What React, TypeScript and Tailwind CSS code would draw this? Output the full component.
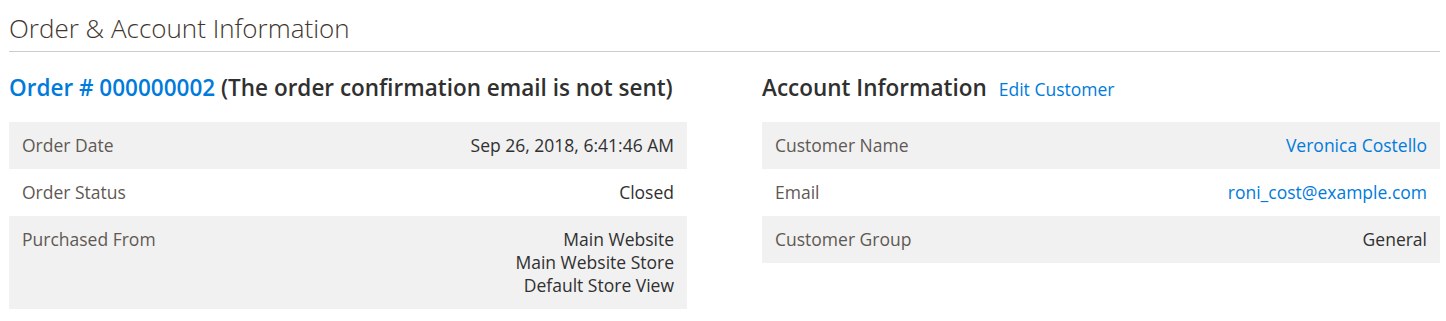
import React from "react";

type Row = { label: string; value: React.ReactNode };

const font = { fontFamily: '"Open Sans", "Noto Sans", sans-serif' };

const InfoTable: React.FC<{ rows: Row[] }> = ({ rows }) => (
  <table className="w-full border-collapse text-[17.5px] leading-[23px]">
    <tbody>
      {rows.map((row, i) => (
        <tr key={row.label} className={i % 2 === 0 ? "bg-[#f1f1f1]" : "bg-white"}>
          <th className="py-3 pl-[13px] pr-3 text-left align-top font-normal text-[#5f5954]">{row.label}</th>
          <td className="py-3 pr-[13px] pl-3 text-right align-top text-[#303030]">{row.value}</td>
        </tr>
      ))}
    </tbody>
  </table>
);

const App: React.FC = () => {
  const orderRows: Row[] = [
    { label: "Order Date", value: "Sep 26, 2018, 6:41:46 AM" },
    { label: "Order Status", value: "Closed" },
    {
      label: "Purchased From",
      value: (
        <>
          Main Website
          <br />
          Main Website Store
          <br />
          Default Store View
        </>
      ),
    },
  ];

  const accountRows: Row[] = [
    {
      label: "Customer Name",
      value: (
        <a href="#" className="text-[#007bdb]">
          Veronica Costello
        </a>
      ),
    },
    {
      label: "Email",
      value: (
        <a href="#" className="text-[#007bdb]">
          roni_cost@example.com
        </a>
      ),
    },
    { label: "Customer Group", value: "General" },
  ];

  return (
    <div className="bg-white w-[1446px] h-[321px] pl-[9px] pr-[6px] pt-[13px]" style={font}>
      {/* Section title */}
      <div className="border-b border-[#cccccc] pb-[8px]">
        <h2 className="text-[26px] leading-[30px] font-light text-[#41362f]">Order &amp; Account Information</h2>
      </div>

      <div className="grid grid-cols-2 gap-x-[75px] pt-[22px]">
        {/* Order information */}
        <section>
          <h3 className="mb-[20px] h-[28px] text-[22.5px] leading-[28px] font-semibold text-[#303030] whitespace-nowrap">
            <a href="#" className="text-[#007bdb]">
              Order # 000000002
            </a>{" "}
            (The order confirmation email is not sent)
          </h3>
          <InfoTable rows={orderRows} />
        </section>

        {/* Account information */}
        <section>
          <h3 className="mb-[20px] h-[28px] text-[22.5px] leading-[28px] font-semibold text-[#303030] whitespace-nowrap">
            Account Information
            <a href="#" className="ml-[12px] text-[17.5px] font-normal text-[#007bdb]">
              Edit Customer
            </a>
          </h3>
          <InfoTable rows={accountRows} />
        </section>
      </div>
    </div>
  );
};

export default App;
